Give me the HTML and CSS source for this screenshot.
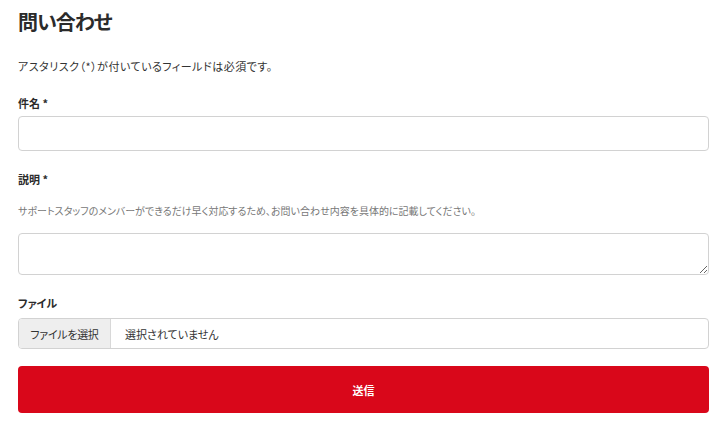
FILE: index.html
```html
<!DOCTYPE html>
<html lang="ja">
<head>
<meta charset="utf-8">
<link rel="stylesheet" href="styles.css">
</head>
<body>
<main class="page">
  <h1 class="title">問い合わせ</h1>
  <p class="note">アスタリスク（*）が付いているフィールドは必須です。</p>
  <form class="form">
    <label class="label label-first">件名 *</label>
    <input class="input" type="text">
    <label class="label">説明 *</label>
    <p class="help">サポートスタッフのメンバーができるだけ早く対応するため、お問い合わせ内容を具体的に記載してください。</p>
    <textarea class="textarea"></textarea>
    <label class="label">ファイル</label>
    <div class="file">
      <span class="file-btn">ファイルを選択</span>
      <span class="file-name">選択されていません</span>
    </div>
    <button class="submit" type="button">送信</button>
  </form>
</main>
</body>
</html>
```

FILE: styles.css
```css
* { box-sizing: border-box; }
html, body { margin: 0; padding: 0; background: #fff; }
body {
  font-family: "Noto Sans CJK JP", "Noto Sans", sans-serif;
  color: #333;
  font-feature-settings: "palt";
}
.page { padding: 10px 15px 0 18px; }
.title {
  margin: 0;
  font-size: 20px;
  line-height: 24px;
  font-weight: 700;
  color: #2b2b2b;
  letter-spacing: -1px;
}
.note {
  margin: 24px 0 0;
  font-size: 11px;
  line-height: 16px;
  color: #333;
  letter-spacing: 0.5px;
}
.form { display: flex; flex-direction: column; }
.label {
  display: block;
  margin-top: 20px;
  font-size: 11px;
  line-height: 16px;
  font-weight: 700;
  color: #2b2b2b;
}
.label-first { margin-top: 21px; }
.input {
  margin-top: 5px;
  height: 35px;
  width: 100%;
  border: 1px solid #d2d2d2;
  border-radius: 4px;
  background: #fff;
  font: inherit;
}
.help {
  margin: 16px 0 0;
  font-size: 10px;
  line-height: 16px;
  color: #777;
}
.textarea {
  margin-top: 14px;
  height: 42px;
  width: 100%;
  border: 1px solid #d2d2d2;
  border-radius: 4px;
  background: #fff;
  font: inherit;
  resize: vertical;
  display: block;
}
.file {
  margin-top: 7px;
  height: 31px;
  display: flex;
  align-items: stretch;
  border: 1px solid #d2d2d2;
  border-radius: 4px;
  overflow: hidden;
  font-size: 11px;
}
.file-btn {
  width: 92px;
  flex: none;
  display: flex;
  align-items: center;
  justify-content: center;
  background: #eeeeee;
  border-right: 1px solid #d8d8d8;
  color: #333;
  letter-spacing: -0.3px;
}
.file-name {
  display: flex;
  align-items: center;
  padding-left: 14px;
  color: #333;
}
.submit {
  margin-top: 17px;
  height: 47px;
  width: 100%;
  border: 0;
  border-radius: 4px;
  background: #d9071a;
  color: #fff;
  font: inherit;
  font-size: 11px;
  font-weight: 700;
}
```
